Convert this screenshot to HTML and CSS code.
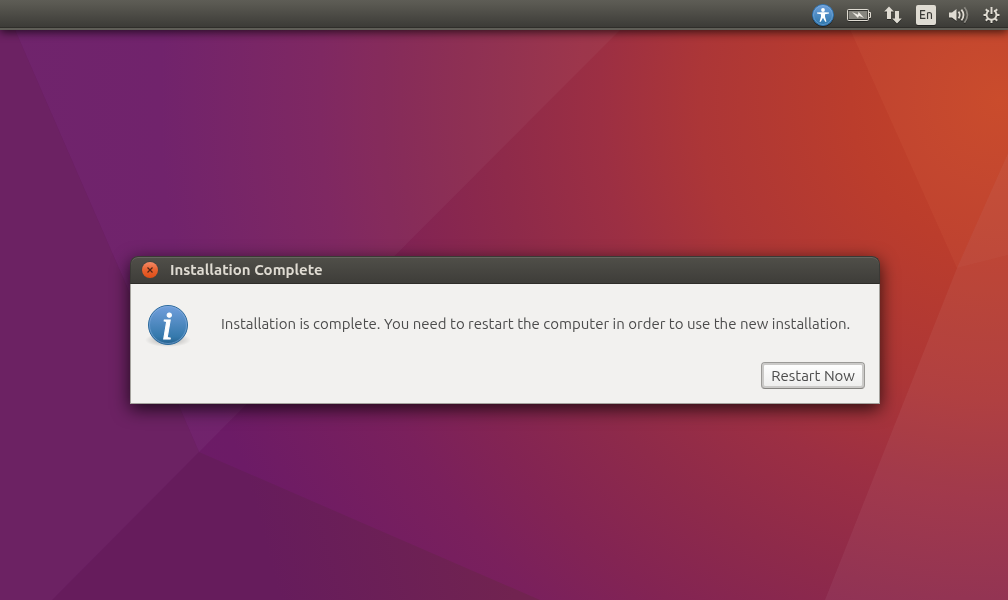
FILE: index.html
```html
<!DOCTYPE html>
<html lang="en">
  <head>
    <meta charset="UTF-8" />
    <meta name="viewport" content="width=device-width, initial-scale=1.0" />
    <title>Installation Complete</title>
    <link rel="stylesheet" href="styles.css">
  </head>
  <body>
    <svg class="wallpaper" viewBox="0 0 1008 600" preserveAspectRatio="xMidYMid slice" aria-hidden="true">
      <defs>
        <radialGradient id="glow" gradientUnits="userSpaceOnUse" cx="1000" cy="100" r="1000">
          <stop offset="0" stop-color="#c64627" />
          <stop offset="0.15" stop-color="#bb3d2c" />
          <stop offset="0.3" stop-color="#ac3637" />
          <stop offset="0.4" stop-color="#9c2f43" />
          <stop offset="0.5" stop-color="#8e2a4a" />
          <stop offset="0.6" stop-color="#832453" />
          <stop offset="0.68" stop-color="#7a205c" />
          <stop offset="0.84" stop-color="#6c1b66" />
          <stop offset="1" stop-color="#6a1c66" />
        </radialGradient>
        <linearGradient id="shade" gradientUnits="userSpaceOnUse" x1="280" y1="600" x2="500" y2="540">
          <stop offset="0" stop-color="#661c5c" />
          <stop offset="1" stop-color="#712350" />
        </linearGradient>
      </defs>
      <rect width="1008" height="600" fill="url(#glow)" />
      <path d="M2 0H650L199 452z" fill="#fff" fill-opacity="0.04" />
      <path d="M0 0H2L199 452L52 600H0z" fill="#6c2263" />
      <path d="M199 452L540 600H52z" fill="url(#shade)" />
      <path d="M837 0H1008V153L957 268z" fill="#ffa070" fill-opacity="0.07" />
      <path d="M957 268L1008 153V255z" fill="#fff" fill-opacity="0.07" />
      <path d="M957 268L1008 255V600H825z" fill="#fff" fill-opacity="0.05" />
    </svg>

    <header class="panel">
      <button class="indicator" aria-label="Accessibility">
        <svg width="22" height="22" viewBox="0 0 22 22">
          <defs>
            <linearGradient id="blue" x1="0" y1="0" x2="0" y2="1">
              <stop offset="0" stop-color="#6ea0dc" />
              <stop offset="1" stop-color="#2c76ab" />
            </linearGradient>
          </defs>
          <circle cx="11" cy="11" r="10.5" fill="url(#blue)" stroke="#2f72ae" />
          <circle cx="11" cy="11" r="9.5" fill="none" stroke="#8ab4e2" stroke-opacity="0.5" />
          <circle cx="11" cy="6" r="1.9" fill="#fff" />
          <path d="M5 8.4L9.3 8.2H12.7L17 8.4V9.4L13 10.2V12.8L14.5 17.8H13.2L11 13.8L8.8 17.8H7.5L9 12.8V10.2L5 9.4z" fill="#fff" />
        </svg>
      </button>
      <button class="indicator" aria-label="Battery">
        <svg width="24" height="12" viewBox="0 0 24 12">
          <rect x="0.5" y="0.5" width="21" height="11" rx="1" fill="none" stroke="#dfdbd2" />
          <rect x="2" y="2" width="18" height="8" fill="#87867f" />
          <path d="M22 3.5H23.5V8.5H22" fill="none" stroke="#dfdbd2" />
          <path d="M5 3L11 5.8L11.5 2.8L17 9L12 6.8L11 9z" fill="#f0ede6" />
        </svg>
      </button>
      <button class="indicator" aria-label="Network">
        <svg width="19" height="18" viewBox="0 0 19 18">
          <path d="M5 0.5L9.8 5.5H7V13H3V5.5H0.2z M11 5H15V12.5H17.8L13 17.5L8.2 12.5H11z" fill="#dfdbd2" />
        </svg>
      </button>
      <button class="indicator keyboard">En</button>
      <button class="indicator" aria-label="Sound">
        <svg width="21" height="18" viewBox="0 0 21 18" fill="none" stroke="#dfdbd2" stroke-width="1.8">
          <path d="M0 6.5H3L7.5 3V15L3 11.5H0z" fill="#dfdbd2" stroke="none" />
          <path d="M9.5 5.6Q12 9 9.5 12.4" />
          <path d="M12.4 3.6Q16.6 9 12.4 14.4" />
          <path d="M15.4 1.2Q21.4 9 15.4 16.8" stroke="#8c8a83" />
        </svg>
      </button>
      <button class="indicator" aria-label="Session">
        <svg width="17" height="18" viewBox="0 0 17 18" fill="none" stroke="#dfdbd2" stroke-width="2">
          <path d="M6 4.5A5 5 0 1 0 11 4.5" />
          <path d="M8.5 1V8" />
          <path d="M8.5 14V17M0.5 9H4M13 9H16.5M2.8 3.3L5 5.5M14.2 3.3L12 5.5M2.8 14.7L5 12.5M14.2 14.7L12 12.5" />
        </svg>
      </button>
    </header>

    <main class="desktop">
      <section class="dialog" role="dialog" aria-labelledby="title" aria-describedby="message">
        <header class="titlebar">
          <button class="close" aria-label="Close">
            <svg width="8" height="8" viewBox="0 0 8 8">
              <path d="M1.5 1.5L6.5 6.5M6.5 1.5L1.5 6.5" stroke="#4e2416" stroke-width="1.2" />
            </svg>
          </button>
          <h1 class="title" id="title">Installation Complete</h1>
        </header>
        <div class="content">
          <div class="notice">
            <svg class="info" width="48" height="48" viewBox="0 0 48 48" aria-hidden="true">
              <defs>
                <radialGradient id="ground">
                  <stop offset="0.5" stop-color="#000" stop-opacity="0.16" />
                  <stop offset="1" stop-color="#000" stop-opacity="0" />
                </radialGradient>
                <linearGradient id="ball" x1="0" y1="0" x2="0" y2="1">
                  <stop offset="0" stop-color="#729fdc" />
                  <stop offset="0.8" stop-color="#3579ac" />
                  <stop offset="1" stop-color="#245f8c" />
                </linearGradient>
              </defs>
              <ellipse cx="24" cy="39" rx="23" ry="7" fill="url(#ground)" />
              <circle cx="24" cy="24" r="19.5" fill="url(#ball)" stroke="#2c6a9c" />
              <circle cx="24" cy="24" r="18.5" fill="none" stroke="#8fb5e4" stroke-opacity="0.5" />
              <text class="info-mark" x="23" y="38" text-anchor="middle">i</text>
            </svg>
            <p class="message" id="message">Installation is complete. You need to restart the computer in order to use the new installation.</p>
          </div>
          <div class="actions">
            <button class="restart">Restart Now</button>
          </div>
        </div>
      </section>
    </main>
  </body>
</html>
```

FILE: styles.css
```css
* {
  box-sizing: border-box;
}
body {
  margin: 0;
  min-height: 100vh;
  display: flex;
  flex-direction: column;
  font-family: Ubuntu, "Noto Sans", sans-serif;
  font-size: 15px;
  color: #4c4c4c;
  background-color: #6c2263;
}
button {
  font: inherit;
  padding: 0;
  border: none;
}
svg {
  display: block;
}
.wallpaper {
  position: fixed;
  top: 0;
  left: 0;
  width: 100%;
  height: 100%;
  z-index: -1;
}
.panel {
  display: flex;
  justify-content: flex-end;
  align-items: center;
  gap: 13px;
  height: 30px;
  padding: 0 8px;
  background: linear-gradient(#5e5d56, #5a5952 4px, #3c3b37 27px, #2f2e2a 27px, #2f2e2a 28px, #5f5e57 28px);
  box-shadow: 0 2px 10px rgba(0, 0, 0, 0.7);
}
.indicator {
  background: none;
  filter: drop-shadow(0 1px 0 rgba(0, 0, 0, 0.4));
}
.keyboard {
  width: 20px;
  height: 20px;
  border-radius: 2px;
  background-color: #dfdbd2;
  color: #3c3b37;
  font-size: 12px;
  font-weight: 500;
  line-height: 20px;
}
.desktop {
  flex: 1;
  display: flex;
  justify-content: center;
  align-items: center;
  padding: 30px 16px 0 18px;
}
.dialog {
  width: 100%;
  max-width: 750px;
  border-radius: 8px 8px 0 0;
  box-shadow: 0 5px 18px rgba(0, 0, 0, 0.75);
}
.titlebar {
  display: flex;
  align-items: center;
  gap: 12px;
  height: 28px;
  padding: 0 11px;
  border: 1px solid #3a3935;
  border-bottom-color: #2e2d29;
  border-radius: 8px 8px 0 0;
  background: linear-gradient(#504f49, #3e3d39);
  box-shadow: inset 0 1px 0 #66655e;
}
.close {
  display: flex;
  justify-content: center;
  align-items: center;
  width: 16px;
  height: 16px;
  border-radius: 50%;
  background: linear-gradient(#f68a67, #e8622f 50%, #e04e17);
  box-shadow: 0 0 0 1px #45443e;
}
.title {
  margin: 0;
  font-size: 15px;
  line-height: 20px;
  color: #dfdbd2;
}
.content {
  padding: 17px 14px 14px 13px;
  border: 1px solid #a5a39e;
  border-top: none;
  background-color: #f2f1ef;
}
.notice {
  display: flex;
  align-items: flex-start;
  gap: 29px;
}
.info {
  flex: none;
}
.info-mark {
  font-family: "Liberation Serif", serif;
  font-size: 40px;
  font-style: italic;
  fill: #fff;
  stroke: #fff;
}
.message {
  margin: 13px 0 0;
  line-height: 20px;
}
.actions {
  display: flex;
  justify-content: flex-end;
  margin-top: 13px;
}
.restart {
  height: 27px;
  padding: 0 9px;
  border: 1px solid #9b9a97;
  border-bottom-color: #858481;
  border-radius: 4px;
  background: linear-gradient(#fff, #ededec);
  box-shadow: inset 0 0 0 2px #cbcac8, inset 0 -2px 0 #aaa9a6;
  color: #4c4c4c;
}
```
